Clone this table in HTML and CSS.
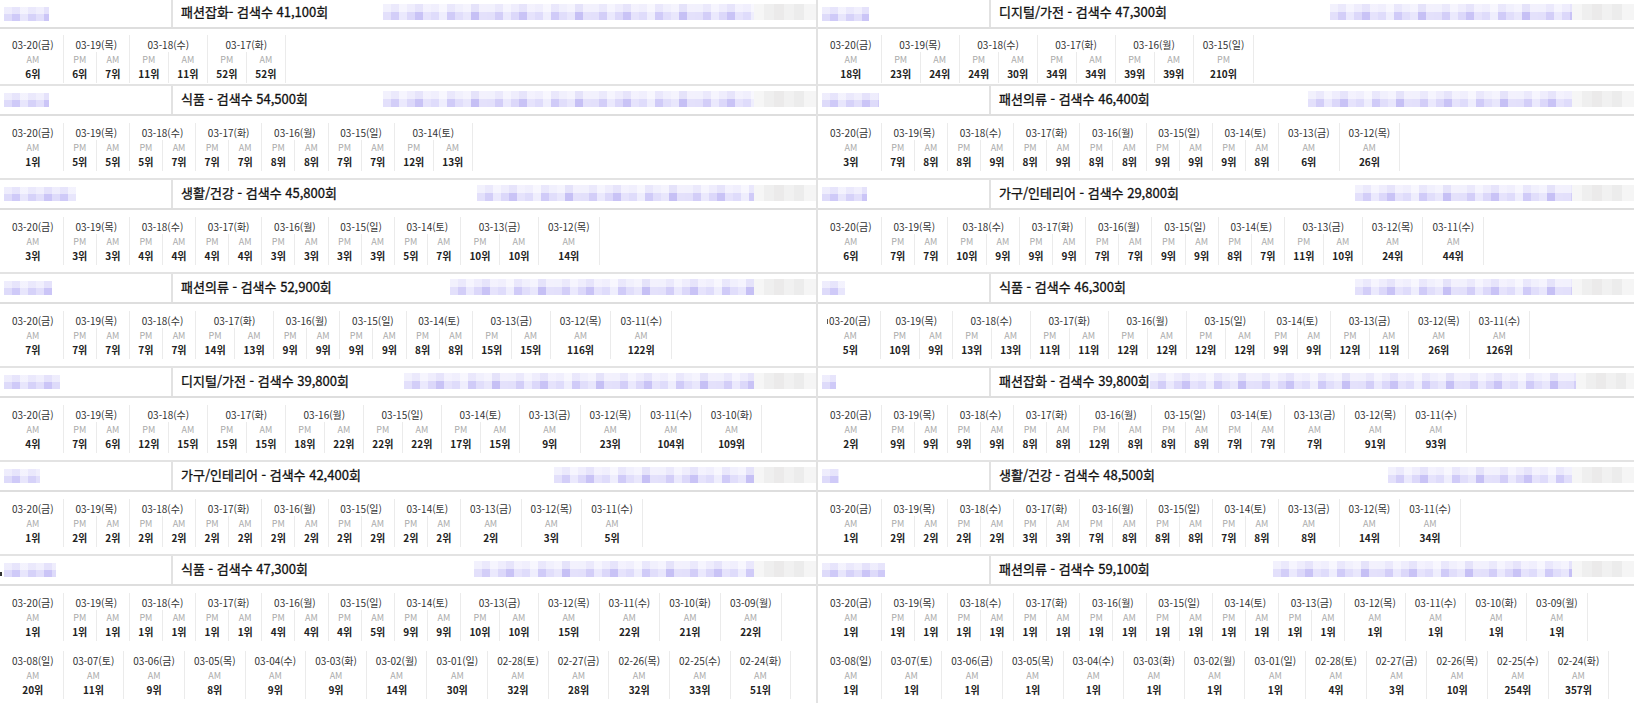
FILE: index.html
```html
<!DOCTYPE html>
<html lang="ko">
<head>
<meta charset="utf-8">
<title>순위</title>
<link rel="stylesheet" href="styles.css">
</head>
<body>
<div class="page">
<div class="panel panel-l">

<div class="blk blk-first">
<div class="hd"><div class="hl"><span class="bl" style="width:45px"></span></div><div class="ht"><span class="tt">패션잡화- 검색수 41,100회</span><span class="br" style="width:433px"></span></div></div>
<div class="dates"><div class="row">
<div class="day"><div class="d">03-20(금)</div><div class="subs"><div class="s"><em class="t">AM</em><b class="r">6위</b></div></div></div>
<div class="day"><div class="d">03-19(목)</div><div class="subs"><div class="s"><em class="t">PM</em><b class="r">6위</b></div><div class="s"><em class="t">AM</em><b class="r">7위</b></div></div></div>
<div class="day"><div class="d">03-18(수)</div><div class="subs"><div class="s"><em class="t">PM</em><b class="r">11위</b></div><div class="s"><em class="t">AM</em><b class="r">11위</b></div></div></div>
<div class="day"><div class="d">03-17(화)</div><div class="subs"><div class="s"><em class="t">PM</em><b class="r">52위</b></div><div class="s"><em class="t">AM</em><b class="r">52위</b></div></div></div>
</div></div>
</div>

<div class="blk">
<div class="hd"><div class="hl"><span class="bl" style="width:45px"></span></div><div class="ht"><span class="tt">식품 - 검색수 54,500회</span><span class="br" style="width:433px"></span></div></div>
<div class="dates"><div class="row">
<div class="day"><div class="d">03-20(금)</div><div class="subs"><div class="s"><em class="t">AM</em><b class="r">1위</b></div></div></div>
<div class="day"><div class="d">03-19(목)</div><div class="subs"><div class="s"><em class="t">PM</em><b class="r">5위</b></div><div class="s"><em class="t">AM</em><b class="r">5위</b></div></div></div>
<div class="day"><div class="d">03-18(수)</div><div class="subs"><div class="s"><em class="t">PM</em><b class="r">5위</b></div><div class="s"><em class="t">AM</em><b class="r">7위</b></div></div></div>
<div class="day"><div class="d">03-17(화)</div><div class="subs"><div class="s"><em class="t">PM</em><b class="r">7위</b></div><div class="s"><em class="t">AM</em><b class="r">7위</b></div></div></div>
<div class="day"><div class="d">03-16(월)</div><div class="subs"><div class="s"><em class="t">PM</em><b class="r">8위</b></div><div class="s"><em class="t">AM</em><b class="r">8위</b></div></div></div>
<div class="day"><div class="d">03-15(일)</div><div class="subs"><div class="s"><em class="t">PM</em><b class="r">7위</b></div><div class="s"><em class="t">AM</em><b class="r">7위</b></div></div></div>
<div class="day"><div class="d">03-14(토)</div><div class="subs"><div class="s"><em class="t">PM</em><b class="r">12위</b></div><div class="s"><em class="t">AM</em><b class="r">13위</b></div></div></div>
</div></div>
</div>

<div class="blk">
<div class="hd"><div class="hl"><span class="bl" style="width:72px"></span></div><div class="ht"><span class="tt">생활/건강 - 검색수 45,800회</span><span class="br" style="width:339px"></span></div></div>
<div class="dates"><div class="row">
<div class="day"><div class="d">03-20(금)</div><div class="subs"><div class="s"><em class="t">AM</em><b class="r">3위</b></div></div></div>
<div class="day"><div class="d">03-19(목)</div><div class="subs"><div class="s"><em class="t">PM</em><b class="r">3위</b></div><div class="s"><em class="t">AM</em><b class="r">3위</b></div></div></div>
<div class="day"><div class="d">03-18(수)</div><div class="subs"><div class="s"><em class="t">PM</em><b class="r">4위</b></div><div class="s"><em class="t">AM</em><b class="r">4위</b></div></div></div>
<div class="day"><div class="d">03-17(화)</div><div class="subs"><div class="s"><em class="t">PM</em><b class="r">4위</b></div><div class="s"><em class="t">AM</em><b class="r">4위</b></div></div></div>
<div class="day"><div class="d">03-16(월)</div><div class="subs"><div class="s"><em class="t">PM</em><b class="r">3위</b></div><div class="s"><em class="t">AM</em><b class="r">3위</b></div></div></div>
<div class="day"><div class="d">03-15(일)</div><div class="subs"><div class="s"><em class="t">PM</em><b class="r">3위</b></div><div class="s"><em class="t">AM</em><b class="r">3위</b></div></div></div>
<div class="day"><div class="d">03-14(토)</div><div class="subs"><div class="s"><em class="t">PM</em><b class="r">5위</b></div><div class="s"><em class="t">AM</em><b class="r">7위</b></div></div></div>
<div class="day"><div class="d">03-13(금)</div><div class="subs"><div class="s"><em class="t">PM</em><b class="r">10위</b></div><div class="s"><em class="t">AM</em><b class="r">10위</b></div></div></div>
<div class="day"><div class="d">03-12(목)</div><div class="subs"><div class="s"><em class="t">AM</em><b class="r">14위</b></div></div></div>
</div></div>
</div>

<div class="blk">
<div class="hd"><div class="hl"><span class="bl" style="width:48px"></span></div><div class="ht"><span class="tt">패션의류 - 검색수 52,900회</span><span class="br" style="width:366px"></span></div></div>
<div class="dates"><div class="row">
<div class="day"><div class="d">03-20(금)</div><div class="subs"><div class="s"><em class="t">AM</em><b class="r">7위</b></div></div></div>
<div class="day"><div class="d">03-19(목)</div><div class="subs"><div class="s"><em class="t">PM</em><b class="r">7위</b></div><div class="s"><em class="t">AM</em><b class="r">7위</b></div></div></div>
<div class="day"><div class="d">03-18(수)</div><div class="subs"><div class="s"><em class="t">PM</em><b class="r">7위</b></div><div class="s"><em class="t">AM</em><b class="r">7위</b></div></div></div>
<div class="day"><div class="d">03-17(화)</div><div class="subs"><div class="s"><em class="t">PM</em><b class="r">14위</b></div><div class="s"><em class="t">AM</em><b class="r">13위</b></div></div></div>
<div class="day"><div class="d">03-16(월)</div><div class="subs"><div class="s"><em class="t">PM</em><b class="r">9위</b></div><div class="s"><em class="t">AM</em><b class="r">9위</b></div></div></div>
<div class="day"><div class="d">03-15(일)</div><div class="subs"><div class="s"><em class="t">PM</em><b class="r">9위</b></div><div class="s"><em class="t">AM</em><b class="r">9위</b></div></div></div>
<div class="day"><div class="d">03-14(토)</div><div class="subs"><div class="s"><em class="t">PM</em><b class="r">8위</b></div><div class="s"><em class="t">AM</em><b class="r">8위</b></div></div></div>
<div class="day"><div class="d">03-13(금)</div><div class="subs"><div class="s"><em class="t">PM</em><b class="r">15위</b></div><div class="s"><em class="t">AM</em><b class="r">15위</b></div></div></div>
<div class="day"><div class="d">03-12(목)</div><div class="subs"><div class="s"><em class="t">AM</em><b class="r">116위</b></div></div></div>
<div class="day"><div class="d">03-11(수)</div><div class="subs"><div class="s"><em class="t">AM</em><b class="r">122위</b></div></div></div>
</div></div>
</div>

<div class="blk">
<div class="hd"><div class="hl"><span class="bl" style="width:56px"></span></div><div class="ht"><span class="tt">디지털/가전 - 검색수 39,800회</span><span class="br" style="width:412px"></span></div></div>
<div class="dates"><div class="row">
<div class="day"><div class="d">03-20(금)</div><div class="subs"><div class="s"><em class="t">AM</em><b class="r">4위</b></div></div></div>
<div class="day"><div class="d">03-19(목)</div><div class="subs"><div class="s"><em class="t">PM</em><b class="r">7위</b></div><div class="s"><em class="t">AM</em><b class="r">6위</b></div></div></div>
<div class="day"><div class="d">03-18(수)</div><div class="subs"><div class="s"><em class="t">PM</em><b class="r">12위</b></div><div class="s"><em class="t">AM</em><b class="r">15위</b></div></div></div>
<div class="day"><div class="d">03-17(화)</div><div class="subs"><div class="s"><em class="t">PM</em><b class="r">15위</b></div><div class="s"><em class="t">AM</em><b class="r">15위</b></div></div></div>
<div class="day"><div class="d">03-16(월)</div><div class="subs"><div class="s"><em class="t">PM</em><b class="r">18위</b></div><div class="s"><em class="t">AM</em><b class="r">22위</b></div></div></div>
<div class="day"><div class="d">03-15(일)</div><div class="subs"><div class="s"><em class="t">PM</em><b class="r">22위</b></div><div class="s"><em class="t">AM</em><b class="r">22위</b></div></div></div>
<div class="day"><div class="d">03-14(토)</div><div class="subs"><div class="s"><em class="t">PM</em><b class="r">17위</b></div><div class="s"><em class="t">AM</em><b class="r">15위</b></div></div></div>
<div class="day"><div class="d">03-13(금)</div><div class="subs"><div class="s"><em class="t">AM</em><b class="r">9위</b></div></div></div>
<div class="day"><div class="d">03-12(목)</div><div class="subs"><div class="s"><em class="t">AM</em><b class="r">23위</b></div></div></div>
<div class="day"><div class="d">03-11(수)</div><div class="subs"><div class="s"><em class="t">AM</em><b class="r">104위</b></div></div></div>
<div class="day"><div class="d">03-10(화)</div><div class="subs"><div class="s"><em class="t">AM</em><b class="r">109위</b></div></div></div>
</div></div>
</div>

<div class="blk">
<div class="hd"><div class="hl"><span class="bl" style="width:36px"></span></div><div class="ht"><span class="tt">가구/인테리어 - 검색수 42,400회</span><span class="br" style="width:262px"></span></div></div>
<div class="dates"><div class="row">
<div class="day"><div class="d">03-20(금)</div><div class="subs"><div class="s"><em class="t">AM</em><b class="r">1위</b></div></div></div>
<div class="day"><div class="d">03-19(목)</div><div class="subs"><div class="s"><em class="t">PM</em><b class="r">2위</b></div><div class="s"><em class="t">AM</em><b class="r">2위</b></div></div></div>
<div class="day"><div class="d">03-18(수)</div><div class="subs"><div class="s"><em class="t">PM</em><b class="r">2위</b></div><div class="s"><em class="t">AM</em><b class="r">2위</b></div></div></div>
<div class="day"><div class="d">03-17(화)</div><div class="subs"><div class="s"><em class="t">PM</em><b class="r">2위</b></div><div class="s"><em class="t">AM</em><b class="r">2위</b></div></div></div>
<div class="day"><div class="d">03-16(월)</div><div class="subs"><div class="s"><em class="t">PM</em><b class="r">2위</b></div><div class="s"><em class="t">AM</em><b class="r">2위</b></div></div></div>
<div class="day"><div class="d">03-15(일)</div><div class="subs"><div class="s"><em class="t">PM</em><b class="r">2위</b></div><div class="s"><em class="t">AM</em><b class="r">2위</b></div></div></div>
<div class="day"><div class="d">03-14(토)</div><div class="subs"><div class="s"><em class="t">PM</em><b class="r">2위</b></div><div class="s"><em class="t">AM</em><b class="r">2위</b></div></div></div>
<div class="day"><div class="d">03-13(금)</div><div class="subs"><div class="s"><em class="t">AM</em><b class="r">2위</b></div></div></div>
<div class="day"><div class="d">03-12(목)</div><div class="subs"><div class="s"><em class="t">AM</em><b class="r">3위</b></div></div></div>
<div class="day"><div class="d">03-11(수)</div><div class="subs"><div class="s"><em class="t">AM</em><b class="r">5위</b></div></div></div>
</div></div>
</div>

<div class="blk">
<div class="hd"><div class="hl"><span class="mk"></span><span class="bl" style="width:52px"></span></div><div class="ht"><span class="tt">식품 - 검색수 47,300회</span><span class="br" style="width:342px"></span></div></div>
<div class="dates"><div class="row">
<div class="day"><div class="d">03-20(금)</div><div class="subs"><div class="s"><em class="t">AM</em><b class="r">1위</b></div></div></div>
<div class="day"><div class="d">03-19(목)</div><div class="subs"><div class="s"><em class="t">PM</em><b class="r">1위</b></div><div class="s"><em class="t">AM</em><b class="r">1위</b></div></div></div>
<div class="day"><div class="d">03-18(수)</div><div class="subs"><div class="s"><em class="t">PM</em><b class="r">1위</b></div><div class="s"><em class="t">AM</em><b class="r">1위</b></div></div></div>
<div class="day"><div class="d">03-17(화)</div><div class="subs"><div class="s"><em class="t">PM</em><b class="r">1위</b></div><div class="s"><em class="t">AM</em><b class="r">1위</b></div></div></div>
<div class="day"><div class="d">03-16(월)</div><div class="subs"><div class="s"><em class="t">PM</em><b class="r">4위</b></div><div class="s"><em class="t">AM</em><b class="r">4위</b></div></div></div>
<div class="day"><div class="d">03-15(일)</div><div class="subs"><div class="s"><em class="t">PM</em><b class="r">4위</b></div><div class="s"><em class="t">AM</em><b class="r">5위</b></div></div></div>
<div class="day"><div class="d">03-14(토)</div><div class="subs"><div class="s"><em class="t">PM</em><b class="r">9위</b></div><div class="s"><em class="t">AM</em><b class="r">9위</b></div></div></div>
<div class="day"><div class="d">03-13(금)</div><div class="subs"><div class="s"><em class="t">PM</em><b class="r">10위</b></div><div class="s"><em class="t">AM</em><b class="r">10위</b></div></div></div>
<div class="day"><div class="d">03-12(목)</div><div class="subs"><div class="s"><em class="t">AM</em><b class="r">15위</b></div></div></div>
<div class="day"><div class="d">03-11(수)</div><div class="subs"><div class="s"><em class="t">AM</em><b class="r">22위</b></div></div></div>
<div class="day"><div class="d">03-10(화)</div><div class="subs"><div class="s"><em class="t">AM</em><b class="r">21위</b></div></div></div>
<div class="day"><div class="d">03-09(월)</div><div class="subs"><div class="s"><em class="t">AM</em><b class="r">22위</b></div></div></div>
</div><div class="row">
<div class="day"><div class="d">03-08(일)</div><div class="subs"><div class="s"><em class="t">AM</em><b class="r">20위</b></div></div></div>
<div class="day"><div class="d">03-07(토)</div><div class="subs"><div class="s"><em class="t">AM</em><b class="r">11위</b></div></div></div>
<div class="day"><div class="d">03-06(금)</div><div class="subs"><div class="s"><em class="t">AM</em><b class="r">9위</b></div></div></div>
<div class="day"><div class="d">03-05(목)</div><div class="subs"><div class="s"><em class="t">AM</em><b class="r">8위</b></div></div></div>
<div class="day"><div class="d">03-04(수)</div><div class="subs"><div class="s"><em class="t">AM</em><b class="r">9위</b></div></div></div>
<div class="day"><div class="d">03-03(화)</div><div class="subs"><div class="s"><em class="t">AM</em><b class="r">9위</b></div></div></div>
<div class="day"><div class="d">03-02(월)</div><div class="subs"><div class="s"><em class="t">AM</em><b class="r">14위</b></div></div></div>
<div class="day"><div class="d">03-01(일)</div><div class="subs"><div class="s"><em class="t">AM</em><b class="r">30위</b></div></div></div>
<div class="day"><div class="d">02-28(토)</div><div class="subs"><div class="s"><em class="t">AM</em><b class="r">32위</b></div></div></div>
<div class="day"><div class="d">02-27(금)</div><div class="subs"><div class="s"><em class="t">AM</em><b class="r">28위</b></div></div></div>
<div class="day"><div class="d">02-26(목)</div><div class="subs"><div class="s"><em class="t">AM</em><b class="r">32위</b></div></div></div>
<div class="day"><div class="d">02-25(수)</div><div class="subs"><div class="s"><em class="t">AM</em><b class="r">33위</b></div></div></div>
<div class="day"><div class="d">02-24(화)</div><div class="subs"><div class="s"><em class="t">AM</em><b class="r">51위</b></div></div></div>
</div></div>
</div>

</div>
<div class="panel panel-r">

<div class="blk blk-first">
<div class="hd"><div class="hl"><span class="bl" style="width:47px"></span></div><div class="ht"><span class="tt">디지털/가전 - 검색수 47,300회</span><span class="br" style="width:304px"></span></div></div>
<div class="dates"><div class="row">
<div class="day"><div class="d">03-20(금)</div><div class="subs"><div class="s"><em class="t">AM</em><b class="r">18위</b></div></div></div>
<div class="day"><div class="d">03-19(목)</div><div class="subs"><div class="s"><em class="t">PM</em><b class="r">23위</b></div><div class="s"><em class="t">AM</em><b class="r">24위</b></div></div></div>
<div class="day"><div class="d">03-18(수)</div><div class="subs"><div class="s"><em class="t">PM</em><b class="r">24위</b></div><div class="s"><em class="t">AM</em><b class="r">30위</b></div></div></div>
<div class="day"><div class="d">03-17(화)</div><div class="subs"><div class="s"><em class="t">PM</em><b class="r">34위</b></div><div class="s"><em class="t">AM</em><b class="r">34위</b></div></div></div>
<div class="day"><div class="d">03-16(월)</div><div class="subs"><div class="s"><em class="t">PM</em><b class="r">39위</b></div><div class="s"><em class="t">AM</em><b class="r">39위</b></div></div></div>
<div class="day"><div class="d">03-15(일)</div><div class="subs"><div class="s"><em class="t">PM</em><b class="r">210위</b></div></div></div>
</div></div>
</div>

<div class="blk">
<div class="hd"><div class="hl"><span class="bl" style="width:57px"></span></div><div class="ht"><span class="tt">패션의류 - 검색수 46,400회</span><span class="br" style="width:326px"></span></div></div>
<div class="dates"><div class="row">
<div class="day"><div class="d">03-20(금)</div><div class="subs"><div class="s"><em class="t">AM</em><b class="r">3위</b></div></div></div>
<div class="day"><div class="d">03-19(목)</div><div class="subs"><div class="s"><em class="t">PM</em><b class="r">7위</b></div><div class="s"><em class="t">AM</em><b class="r">8위</b></div></div></div>
<div class="day"><div class="d">03-18(수)</div><div class="subs"><div class="s"><em class="t">PM</em><b class="r">8위</b></div><div class="s"><em class="t">AM</em><b class="r">9위</b></div></div></div>
<div class="day"><div class="d">03-17(화)</div><div class="subs"><div class="s"><em class="t">PM</em><b class="r">8위</b></div><div class="s"><em class="t">AM</em><b class="r">9위</b></div></div></div>
<div class="day"><div class="d">03-16(월)</div><div class="subs"><div class="s"><em class="t">PM</em><b class="r">8위</b></div><div class="s"><em class="t">AM</em><b class="r">8위</b></div></div></div>
<div class="day"><div class="d">03-15(일)</div><div class="subs"><div class="s"><em class="t">PM</em><b class="r">9위</b></div><div class="s"><em class="t">AM</em><b class="r">9위</b></div></div></div>
<div class="day"><div class="d">03-14(토)</div><div class="subs"><div class="s"><em class="t">PM</em><b class="r">9위</b></div><div class="s"><em class="t">AM</em><b class="r">8위</b></div></div></div>
<div class="day"><div class="d">03-13(금)</div><div class="subs"><div class="s"><em class="t">AM</em><b class="r">6위</b></div></div></div>
<div class="day"><div class="d">03-12(목)</div><div class="subs"><div class="s"><em class="t">AM</em><b class="r">26위</b></div></div></div>
</div></div>
</div>

<div class="blk">
<div class="hd"><div class="hl"><span class="bl" style="width:45px"></span></div><div class="ht"><span class="tt">가구/인테리어 - 검색수 29,800회</span><span class="br" style="width:279px"></span></div></div>
<div class="dates"><div class="row">
<div class="day"><div class="d">03-20(금)</div><div class="subs"><div class="s"><em class="t">AM</em><b class="r">6위</b></div></div></div>
<div class="day"><div class="d">03-19(목)</div><div class="subs"><div class="s"><em class="t">PM</em><b class="r">7위</b></div><div class="s"><em class="t">AM</em><b class="r">7위</b></div></div></div>
<div class="day"><div class="d">03-18(수)</div><div class="subs"><div class="s"><em class="t">PM</em><b class="r">10위</b></div><div class="s"><em class="t">AM</em><b class="r">9위</b></div></div></div>
<div class="day"><div class="d">03-17(화)</div><div class="subs"><div class="s"><em class="t">PM</em><b class="r">9위</b></div><div class="s"><em class="t">AM</em><b class="r">9위</b></div></div></div>
<div class="day"><div class="d">03-16(월)</div><div class="subs"><div class="s"><em class="t">PM</em><b class="r">7위</b></div><div class="s"><em class="t">AM</em><b class="r">7위</b></div></div></div>
<div class="day"><div class="d">03-15(일)</div><div class="subs"><div class="s"><em class="t">PM</em><b class="r">9위</b></div><div class="s"><em class="t">AM</em><b class="r">9위</b></div></div></div>
<div class="day"><div class="d">03-14(토)</div><div class="subs"><div class="s"><em class="t">PM</em><b class="r">8위</b></div><div class="s"><em class="t">AM</em><b class="r">7위</b></div></div></div>
<div class="day"><div class="d">03-13(금)</div><div class="subs"><div class="s"><em class="t">PM</em><b class="r">11위</b></div><div class="s"><em class="t">AM</em><b class="r">10위</b></div></div></div>
<div class="day"><div class="d">03-12(목)</div><div class="subs"><div class="s"><em class="t">AM</em><b class="r">24위</b></div></div></div>
<div class="day"><div class="d">03-11(수)</div><div class="subs"><div class="s"><em class="t">AM</em><b class="r">44위</b></div></div></div>
</div></div>
</div>

<div class="blk">
<div class="hd"><div class="hl"><span class="bl" style="width:23px"></span></div><div class="ht"><span class="tt">식품 - 검색수 46,300회</span><span class="br" style="width:279px"></span></div></div>
<div class="dates"><div class="row">
<div class="day"><div class="d"><span class="tick"></span>03-20(금)</div><div class="subs"><div class="s"><em class="t">AM</em><b class="r">5위</b></div></div></div>
<div class="day"><div class="d">03-19(목)</div><div class="subs"><div class="s"><em class="t">PM</em><b class="r">10위</b></div><div class="s"><em class="t">AM</em><b class="r">9위</b></div></div></div>
<div class="day"><div class="d">03-18(수)</div><div class="subs"><div class="s"><em class="t">PM</em><b class="r">13위</b></div><div class="s"><em class="t">AM</em><b class="r">13위</b></div></div></div>
<div class="day"><div class="d">03-17(화)</div><div class="subs"><div class="s"><em class="t">PM</em><b class="r">11위</b></div><div class="s"><em class="t">AM</em><b class="r">11위</b></div></div></div>
<div class="day"><div class="d">03-16(월)</div><div class="subs"><div class="s"><em class="t">PM</em><b class="r">12위</b></div><div class="s"><em class="t">AM</em><b class="r">12위</b></div></div></div>
<div class="day"><div class="d">03-15(일)</div><div class="subs"><div class="s"><em class="t">PM</em><b class="r">12위</b></div><div class="s"><em class="t">AM</em><b class="r">12위</b></div></div></div>
<div class="day"><div class="d">03-14(토)</div><div class="subs"><div class="s"><em class="t">PM</em><b class="r">9위</b></div><div class="s"><em class="t">AM</em><b class="r">9위</b></div></div></div>
<div class="day"><div class="d">03-13(금)</div><div class="subs"><div class="s"><em class="t">PM</em><b class="r">12위</b></div><div class="s"><em class="t">AM</em><b class="r">11위</b></div></div></div>
<div class="day"><div class="d">03-12(목)</div><div class="subs"><div class="s"><em class="t">AM</em><b class="r">26위</b></div></div></div>
<div class="day"><div class="d">03-11(수)</div><div class="subs"><div class="s"><em class="t">AM</em><b class="r">126위</b></div></div></div>
</div></div>
</div>

<div class="blk">
<div class="hd"><div class="hl"><span class="bl" style="width:14px"></span></div><div class="ht"><span class="tt">패션잡화 - 검색수 39,800회</span><span class="br" style="width:488px"></span></div></div>
<div class="dates"><div class="row">
<div class="day"><div class="d">03-20(금)</div><div class="subs"><div class="s"><em class="t">AM</em><b class="r">2위</b></div></div></div>
<div class="day"><div class="d">03-19(목)</div><div class="subs"><div class="s"><em class="t">PM</em><b class="r">9위</b></div><div class="s"><em class="t">AM</em><b class="r">9위</b></div></div></div>
<div class="day"><div class="d">03-18(수)</div><div class="subs"><div class="s"><em class="t">PM</em><b class="r">9위</b></div><div class="s"><em class="t">AM</em><b class="r">9위</b></div></div></div>
<div class="day"><div class="d">03-17(화)</div><div class="subs"><div class="s"><em class="t">PM</em><b class="r">8위</b></div><div class="s"><em class="t">AM</em><b class="r">8위</b></div></div></div>
<div class="day"><div class="d">03-16(월)</div><div class="subs"><div class="s"><em class="t">PM</em><b class="r">12위</b></div><div class="s"><em class="t">AM</em><b class="r">8위</b></div></div></div>
<div class="day"><div class="d">03-15(일)</div><div class="subs"><div class="s"><em class="t">PM</em><b class="r">8위</b></div><div class="s"><em class="t">AM</em><b class="r">8위</b></div></div></div>
<div class="day"><div class="d">03-14(토)</div><div class="subs"><div class="s"><em class="t">PM</em><b class="r">7위</b></div><div class="s"><em class="t">AM</em><b class="r">7위</b></div></div></div>
<div class="day"><div class="d">03-13(금)</div><div class="subs"><div class="s"><em class="t">AM</em><b class="r">7위</b></div></div></div>
<div class="day"><div class="d">03-12(목)</div><div class="subs"><div class="s"><em class="t">AM</em><b class="r">91위</b></div></div></div>
<div class="day"><div class="d">03-11(수)</div><div class="subs"><div class="s"><em class="t">AM</em><b class="r">93위</b></div></div></div>
</div></div>
</div>

<div class="blk">
<div class="hd"><div class="hl"><span class="bl" style="width:17px"></span></div><div class="ht"><span class="tt">생활/건강 - 검색수 48,500회</span><span class="br" style="width:246px"></span></div></div>
<div class="dates"><div class="row">
<div class="day"><div class="d">03-20(금)</div><div class="subs"><div class="s"><em class="t">AM</em><b class="r">1위</b></div></div></div>
<div class="day"><div class="d">03-19(목)</div><div class="subs"><div class="s"><em class="t">PM</em><b class="r">2위</b></div><div class="s"><em class="t">AM</em><b class="r">2위</b></div></div></div>
<div class="day"><div class="d">03-18(수)</div><div class="subs"><div class="s"><em class="t">PM</em><b class="r">2위</b></div><div class="s"><em class="t">AM</em><b class="r">2위</b></div></div></div>
<div class="day"><div class="d">03-17(화)</div><div class="subs"><div class="s"><em class="t">PM</em><b class="r">3위</b></div><div class="s"><em class="t">AM</em><b class="r">3위</b></div></div></div>
<div class="day"><div class="d">03-16(월)</div><div class="subs"><div class="s"><em class="t">PM</em><b class="r">7위</b></div><div class="s"><em class="t">AM</em><b class="r">8위</b></div></div></div>
<div class="day"><div class="d">03-15(일)</div><div class="subs"><div class="s"><em class="t">PM</em><b class="r">8위</b></div><div class="s"><em class="t">AM</em><b class="r">8위</b></div></div></div>
<div class="day"><div class="d">03-14(토)</div><div class="subs"><div class="s"><em class="t">PM</em><b class="r">7위</b></div><div class="s"><em class="t">AM</em><b class="r">8위</b></div></div></div>
<div class="day"><div class="d">03-13(금)</div><div class="subs"><div class="s"><em class="t">AM</em><b class="r">8위</b></div></div></div>
<div class="day"><div class="d">03-12(목)</div><div class="subs"><div class="s"><em class="t">AM</em><b class="r">14위</b></div></div></div>
<div class="day"><div class="d">03-11(수)</div><div class="subs"><div class="s"><em class="t">AM</em><b class="r">34위</b></div></div></div>
</div></div>
</div>

<div class="blk">
<div class="hd"><div class="hl"><span class="bl" style="width:63px"></span></div><div class="ht"><span class="tt">패션의류 - 검색수 59,100회</span><span class="br" style="width:361px"></span></div></div>
<div class="dates"><div class="row">
<div class="day"><div class="d">03-20(금)</div><div class="subs"><div class="s"><em class="t">AM</em><b class="r">1위</b></div></div></div>
<div class="day"><div class="d">03-19(목)</div><div class="subs"><div class="s"><em class="t">PM</em><b class="r">1위</b></div><div class="s"><em class="t">AM</em><b class="r">1위</b></div></div></div>
<div class="day"><div class="d">03-18(수)</div><div class="subs"><div class="s"><em class="t">PM</em><b class="r">1위</b></div><div class="s"><em class="t">AM</em><b class="r">1위</b></div></div></div>
<div class="day"><div class="d">03-17(화)</div><div class="subs"><div class="s"><em class="t">PM</em><b class="r">1위</b></div><div class="s"><em class="t">AM</em><b class="r">1위</b></div></div></div>
<div class="day"><div class="d">03-16(월)</div><div class="subs"><div class="s"><em class="t">PM</em><b class="r">1위</b></div><div class="s"><em class="t">AM</em><b class="r">1위</b></div></div></div>
<div class="day"><div class="d">03-15(일)</div><div class="subs"><div class="s"><em class="t">PM</em><b class="r">1위</b></div><div class="s"><em class="t">AM</em><b class="r">1위</b></div></div></div>
<div class="day"><div class="d">03-14(토)</div><div class="subs"><div class="s"><em class="t">PM</em><b class="r">1위</b></div><div class="s"><em class="t">AM</em><b class="r">1위</b></div></div></div>
<div class="day"><div class="d">03-13(금)</div><div class="subs"><div class="s"><em class="t">PM</em><b class="r">1위</b></div><div class="s"><em class="t">AM</em><b class="r">1위</b></div></div></div>
<div class="day"><div class="d">03-12(목)</div><div class="subs"><div class="s"><em class="t">AM</em><b class="r">1위</b></div></div></div>
<div class="day"><div class="d">03-11(수)</div><div class="subs"><div class="s"><em class="t">AM</em><b class="r">1위</b></div></div></div>
<div class="day"><div class="d">03-10(화)</div><div class="subs"><div class="s"><em class="t">AM</em><b class="r">1위</b></div></div></div>
<div class="day"><div class="d">03-09(월)</div><div class="subs"><div class="s"><em class="t">AM</em><b class="r">1위</b></div></div></div>
</div><div class="row">
<div class="day"><div class="d">03-08(일)</div><div class="subs"><div class="s"><em class="t">AM</em><b class="r">1위</b></div></div></div>
<div class="day"><div class="d">03-07(토)</div><div class="subs"><div class="s"><em class="t">AM</em><b class="r">1위</b></div></div></div>
<div class="day"><div class="d">03-06(금)</div><div class="subs"><div class="s"><em class="t">AM</em><b class="r">1위</b></div></div></div>
<div class="day"><div class="d">03-05(목)</div><div class="subs"><div class="s"><em class="t">AM</em><b class="r">1위</b></div></div></div>
<div class="day"><div class="d">03-04(수)</div><div class="subs"><div class="s"><em class="t">AM</em><b class="r">1위</b></div></div></div>
<div class="day"><div class="d">03-03(화)</div><div class="subs"><div class="s"><em class="t">AM</em><b class="r">1위</b></div></div></div>
<div class="day"><div class="d">03-02(월)</div><div class="subs"><div class="s"><em class="t">AM</em><b class="r">1위</b></div></div></div>
<div class="day"><div class="d">03-01(일)</div><div class="subs"><div class="s"><em class="t">AM</em><b class="r">1위</b></div></div></div>
<div class="day"><div class="d">02-28(토)</div><div class="subs"><div class="s"><em class="t">AM</em><b class="r">4위</b></div></div></div>
<div class="day"><div class="d">02-27(금)</div><div class="subs"><div class="s"><em class="t">AM</em><b class="r">3위</b></div></div></div>
<div class="day"><div class="d">02-26(목)</div><div class="subs"><div class="s"><em class="t">AM</em><b class="r">10위</b></div></div></div>
<div class="day"><div class="d">02-25(수)</div><div class="subs"><div class="s"><em class="t">AM</em><b class="r">254위</b></div></div></div>
<div class="day"><div class="d">02-24(화)</div><div class="subs"><div class="s"><em class="t">AM</em><b class="r">357위</b></div></div></div>
</div></div>
</div>

</div>
</div>
</body>
</html>
```

FILE: styles.css
```css
* { box-sizing: border-box; margin: 0; padding: 0; }

body {
  margin: 0;
  width: 1634px;
  height: 703px;
  overflow: hidden;
  background: #fff;
  font-family: "Noto Sans CJK KR", "Noto Sans", sans-serif;
  color: #222;
}

.page { display: flex; align-items: stretch; min-height: 703px; }

.panel { width: 816px; flex: none; }
.panel-l { width: 818px; border-right: 2px solid #e2e2e2; }

.blk { border-bottom: 2px solid #e3e3e3; }
.blk:last-child { border-bottom: 0; }

.hd {
  display: flex;
  height: 30px;
  border-bottom: 2px solid #dedede;
}
.blk-first .hd { height: 29px; }

.hl {
  width: 173px;
  flex: none;
  border-right: 2px solid #e2e2e2;
  display: flex;
  align-items: center;
  padding-left: 4px;
}

.mk {
  display: block;
  flex: none;
  width: 2px;
  height: 4px;
  margin: 8px 2px 0 -4px;
  background: #333;
}

.ht {
  flex: 1;
  min-width: 0;
  display: flex;
  align-items: center;
  padding-left: 8px;
}

.tt {
  font-size: 13px;
  line-height: 16px;
  color: #111;
  white-space: nowrap;
  margin-top: -3px;
  -webkit-text-stroke: 0.3px #111;
}

.bl, .br { display: block; flex: none; }

.bl {
  height: 14px;
  background-image:
    linear-gradient(180deg, rgba(255,255,255,0.5) 0 50%, rgba(255,255,255,0) 50%),
    repeating-linear-gradient(90deg, #dedbfa 0 8px, #cfcaf8 8px 16px, #e8e6fc 16px 24px, #d6d2f9 24px 32px, #e2dffb 32px 40px, #cbc5f7 40px 48px);
}

.br {
  height: 16px;
  margin-left: auto;
  margin-top: -3px;
  background-image:
    linear-gradient(90deg, #f6f6f6 0 10px, #efefef 10px 20px, #ebeaea 20px 30px, #f1f1f1 30px 40px, #ececec 40px 50px, #f5f5f5 50px),
    linear-gradient(180deg, rgba(255,255,255,0.55) 0 50%, rgba(255,255,255,0) 50%),
    repeating-linear-gradient(90deg, #e3e0fb 0 8px, #d3cef8 8px 16px, #ebe9fd 16px 24px, #dcd8fa 24px 32px, #c9c3f6 32px 40px, #e6e3fc 40px 48px, #dfdcfb 48px 56px, #efeefd 56px 64px, #d0cbf8 64px 72px, #e1defb 72px 80px, #e9e7fc 80px 88px, #c6c0f5 88px 96px, #e4e1fb 96px 104px);
  background-size: 62px 100%, 100% 100%, auto;
  background-position: right top, 0 0, 0 0;
  background-repeat: no-repeat, no-repeat, repeat;
}

.dates {
  display: flex;
  flex-direction: column;
  gap: 10px;
  padding: 7px 0 7px 3px;
}
.blk-first .dates { padding-top: 6px; padding-bottom: 1px; }

.row { display: flex; }

.day {
  flex: none;
  height: 48px;
  display: flex;
  flex-direction: column;
  border-right: 1px solid #ebebeb;
}

.d {
  height: 17px;
  padding: 3px 9px 0;
  font-size: 10px;
  line-height: 14px;
  color: #333;
  text-align: center;
  white-space: nowrap;
}

.tick {
  display: inline-block;
  width: 1px;
  height: 5px;
  margin: 0 1px 0 -3px;
  vertical-align: 1px;
  background: #555;
}

.subs { display: flex; flex: 1; }

.s {
  flex: 1;
  display: flex;
  flex-direction: column;
  align-items: center;
  padding: 0 8.5px;
}
.s + .s { border-left: 1px solid #ebebeb; }

.t {
  font-style: normal;
  font-size: 9px;
  line-height: 14px;
  padding-top: 1px;
  color: #aaa;
}

.r {
  font-size: 10px;
  font-weight: 700;
  line-height: 14px;
  color: #222;
  white-space: nowrap;
}
```
